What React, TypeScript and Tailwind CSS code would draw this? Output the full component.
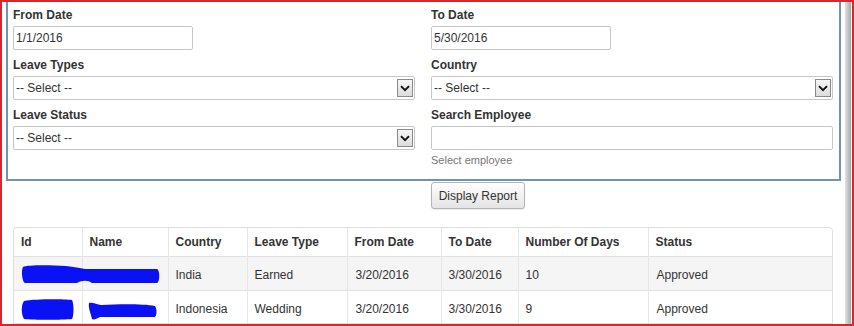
import React from "react";

const columns = [
  { label: "Id", w: "w-[68px]" },
  { label: "Name", w: "w-[86px]" },
  { label: "Country", w: "w-[79px]" },
  { label: "Leave Type", w: "w-[100px]" },
  { label: "From Date", w: "w-[94px]" },
  { label: "To Date", w: "w-[77px]" },
  { label: "Number Of Days", w: "w-[130px]" },
  { label: "Status", w: "w-[186px]" },
];

const rows = [
  { country: "India", type: "Earned", from: "3/20/2016", to: "3/30/2016", days: "10", status: "Approved" },
  { country: "Indonesia", type: "Wedding", from: "3/20/2016", to: "3/30/2016", days: "9", status: "Approved" },
];

const Label = ({ children }: { children: React.ReactNode }) => (
  <div className="font-bold text-[12px] leading-[18px] text-[#333] mb-[2px]">{children}</div>
);

const TextBox = ({ value, className = "" }: { value?: string; className?: string }) => (
  <div className={`h-[24px] border border-[#c6c6c6] rounded-[2px] bg-white flex items-center pl-[2px] ${className}`}>
    {value}
  </div>
);

const Select = () => (
  <div className="h-[24px] border border-[#c6c6c6] rounded-[2px] bg-white flex items-center justify-between pl-[2px] pr-[1px]">
    <span>-- Select --</span>
    <span className="w-[16px] h-[18px] border border-[#8a8a8a] bg-gradient-to-b from-[#f6f6f6] to-[#dcdcdc] flex items-center justify-center">
      <svg width="10" height="7" viewBox="0 0 10 7">
        <path d="M1 1.2 L5 5.2 L9 1.2" stroke="#111" strokeWidth="1.9" fill="none" />
      </svg>
    </span>
  </div>
);

// blue scribbles that hide the employee id and name
const Redaction = ({ row }: { row: number }) =>
  row === 0 ? (
    <svg width="140" height="20" viewBox="0 0 140 20" className="overflow-visible">
      <path
        d="M1 3 C5 1 26 1 44 2 C52 3 58 4 63 5 L135 5 C138 6 138 18 135 19 L70 19 C66 16 60 16 55 19 L3 19 C0 18 -1 6 1 3 Z"
        fill="#0a12f5"
      />
    </svg>
  ) : (
    <svg width="140" height="22" viewBox="0 0 140 22" className="overflow-visible">
      <path d="M2 3 C12 1 40 1 50 2 C52 6 52 17 50 21 C40 22 12 22 2 21 C-1 16 -1 7 2 3 Z" fill="#0a12f5" />
      <path d="M67 5 C71 4 75 7 79 7 C100 6 122 6 133 8 C135 11 135 17 133 19 L78 19 C74 21 72 22 70 21 C69 16 66 10 67 5 Z" fill="#0a12f5" />
    </svg>
  );

export default function App() {
  return (
    <div className="w-[854px] h-[326px] overflow-hidden border-2 border-[#d7262d] bg-white flex font-['Liberation_Sans',Arial,sans-serif] text-[12px] text-[#333]">
      <div className="w-[843px] flex flex-col">
        {/* filter panel */}
        <div className="ml-[4px] w-[835px] border-x-2 border-b-2 border-[#7393ad] pt-[4px] pl-[5px] pr-[6px] pb-[12px] grid grid-cols-[402px_402px] gap-x-[16px]">
          <div className="flex flex-col gap-[6px]">
            <div>
              <Label>From Date</Label>
              <TextBox value="1/1/2016" className="w-[180px]" />
            </div>
            <div>
              <Label>Leave Types</Label>
              <Select />
            </div>
            <div>
              <Label>Leave Status</Label>
              <Select />
            </div>
          </div>
          <div className="flex flex-col gap-[6px]">
            <div>
              <Label>To Date</Label>
              <TextBox value="5/30/2016" className="w-[180px]" />
            </div>
            <div>
              <Label>Country</Label>
              <Select />
            </div>
            <div>
              <Label>Search Employee</Label>
              <TextBox />
              <div className="mt-[3px] text-[11px] leading-[14px] text-[#777]">Select employee</div>
            </div>
          </div>
        </div>

        <div className="mt-[1px] ml-[429px]">
          <button className="w-[94px] h-[27px] border border-[#b4b4b4] rounded-[3px] bg-gradient-to-b from-white to-[#e4e4e4] text-[12px] text-[#333] shadow-[0_1px_1px_rgba(0,0,0,0.08)]">
            Display Report
          </button>
        </div>

        {/* report table */}
        <div className="mt-[18px] ml-[11px] w-[820px] border border-[#dedede] rounded-t-[4px] overflow-hidden">
          <table className="table-fixed border-collapse w-[818px]">
            <thead>
              <tr className="h-[28px]">
                {columns.map((c, i) => (
                  <th
                    key={c.label}
                    className={`${c.w} text-left font-bold px-[7px] pt-[1px] ${i > 0 ? "border-l border-[#e6e6e6]" : ""}`}
                  >
                    {c.label}
                  </th>
                ))}
              </tr>
            </thead>
            <tbody>
              {rows.map((r, ri) => (
                <tr key={ri} className={`h-[34px] border-t border-[#e2e2e2] ${ri === 0 ? "bg-[#f5f5f5]" : "bg-white"}`}>
                  <td className="px-[7px] pt-[2px] overflow-visible">
                    <div className="relative h-[20px]">
                      <div className="absolute left-[1px] top-0 z-10">
                        <Redaction row={ri} />
                      </div>
                    </div>
                  </td>
                  <td className="px-[7px] border-l border-[#e6e6e6]" />
                  <td className="px-[7px] pt-[3px] border-l border-[#e6e6e6]">{r.country}</td>
                  <td className="px-[7px] pt-[3px] border-l border-[#e6e6e6]">{r.type}</td>
                  <td className="px-[8px] pt-[3px] border-l border-[#e6e6e6]">{r.from}</td>
                  <td className="px-[7px] pt-[3px] border-l border-[#e6e6e6]">{r.to}</td>
                  <td className="px-[7px] pt-[3px] border-l border-[#e6e6e6]">{r.days}</td>
                  <td className="px-[8px] pt-[3px] border-l border-[#e6e6e6]">{r.status}</td>
                </tr>
              ))}
            </tbody>
          </table>
        </div>
      </div>

      {/* window scrollbar edge */}
      <div className="w-[6px] bg-gradient-to-r from-[#e2e2e2] via-[#c4c4c4] to-[#a9a9a9]" />
    </div>
  );
}
